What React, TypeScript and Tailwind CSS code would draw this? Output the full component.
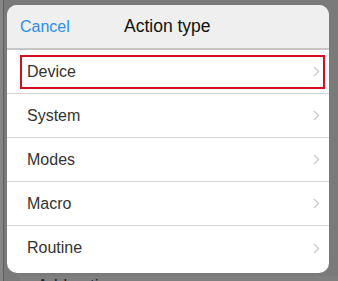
const actions = ["Device", "System", "Modes", "Macro", "Routine"];

function Chevron() {
  return (
    <svg width="7" height="11" viewBox="0 0 7 11" className="shrink-0">
      <polyline points="1,1 5.5,5.5 1,10" fill="none" stroke="#c7c7cc" strokeWidth="1.2" />
    </svg>
  );
}

function ActionRow({ label, selected, last }: { label: string; selected: boolean; last: boolean }) {
  return (
    <div className={last ? "flex flex-1 items-start" : "flex h-[44px] items-center border-b border-[#d4d4d4]"}>
      <div
        className={
          "ml-[13px] mr-[4px] flex h-[34px] flex-1 items-center justify-between border-2 pl-[5px] pr-[3px] " +
          (selected ? "border-[#d40f1c]" : "border-transparent") +
          (last ? " mt-[5px]" : "")
        }
      >
        <span className="text-[16px] text-[#333333]">{label}</span>
        <Chevron />
      </div>
    </div>
  );
}

function DimmedPage() {
  return (
    <div className="flex h-full [grid-area:1/1]">
      <div className="w-[3px] bg-[#868686]" />
      <div className="w-px bg-[#5e5e5e]" />
      <div className="flex flex-1 flex-col justify-end">
        <div className="ml-[16px] h-[5px] bg-[#7f7f7f] pl-[17px] pt-px text-[17px] leading-[17px] text-[#1c1c1c]">
          Add action
        </div>
      </div>
    </div>
  );
}

export default function App() {
  return (
    <div
      className="grid h-[281px] w-[338px] overflow-hidden bg-[#7a7a7a]"
      style={{ fontFamily: '"Liberation Sans", Arial, sans-serif' }}
    >
      <DimmedPage />

      {/* action sheet */}
      <div className="pl-[7px] pt-[5px] [grid-area:1/1]">
        <div className="flex h-[268px] w-[322px] flex-col overflow-hidden rounded-[10px] bg-white">
          <div className="flex h-[45px] shrink-0 items-center border-b-2 border-[#c6c6c6] bg-[#efefef] pl-[13px]">
            <span className="w-[104px] text-[16px] text-[#2d8cf0]">Cancel</span>
            <span className="text-[17.5px] text-[#111111]">Action type</span>
          </div>
          {actions.map((a, i) => (
            <ActionRow key={a} label={a} selected={i === 0} last={i === actions.length - 1} />
          ))}
        </div>
      </div>
    </div>
  );
}
